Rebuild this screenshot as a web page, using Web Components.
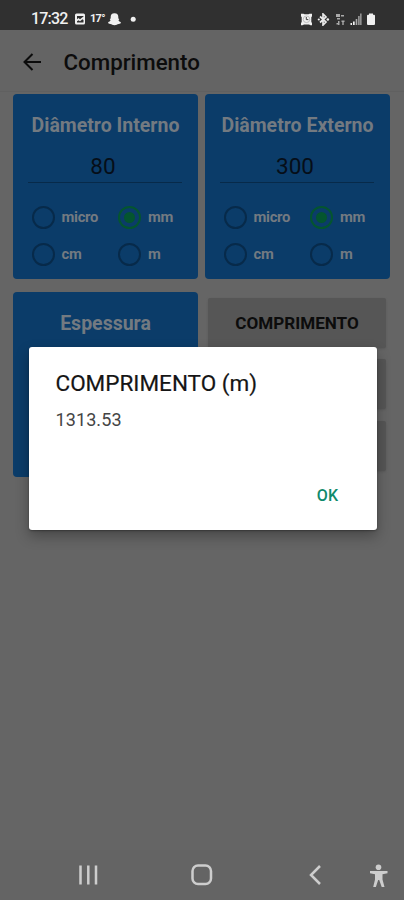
<!DOCTYPE html>
<html lang="pt">
<head>
<meta charset="utf-8">
<title>Comprimento</title>
<style>
  :root {
    --bg: #656565;
    --card: #0b3c69;
    --ink: #0c0c0c;
    --line: #072a4a;
    --label: #737a81;
    --on: #04552f;
  }
  body {
    margin: 0;
    font-family: Roboto, "Liberation Sans", sans-serif;
  }
</style>
</head>
<body>
<phone-screen>
  <status-bar slot="top" time="17:32" temp="17°"></status-bar>
  <app-bar slot="top">Comprimento</app-bar>

  <size-card label="Diâmetro Interno" value="80"></size-card>
  <size-card label="Diâmetro Externo" value="300"></size-card>
  <size-card label="Espessura"></size-card>
  <button-stack>
    <flat-button>COMPRIMENTO</flat-button>
    <flat-button></flat-button>
    <flat-button></flat-button>
  </button-stack>

  <nav-bar slot="bottom"></nav-bar>
  <alert-dialog slot="over" heading="COMPRIMENTO (m)" action="OK">1313.53</alert-dialog>
</phone-screen>

<script>
class PhoneScreen extends HTMLElement {
    constructor() {
        super();
        this.attachShadow({ mode: 'open' });
        this.shadowRoot.innerHTML = `
        <style>
          :host {
            position: relative;
            display: flex;
            flex-direction: column;
            width: 404px;
            height: 900px;
            overflow: hidden;
            background: var(--bg);
          }
          main {
            flex: 1;
            display: grid;
            grid-template-columns: 185px 185px;
            grid-auto-rows: 185px;
            align-content: start;
            gap: 13px 7px;
            padding: 0 13px;
          }
        </style>
        <slot name="top"></slot>
        <main><slot></slot></main>
        <slot name="bottom"></slot>
        <slot name="over"></slot>
        `
    }
}

class StatusBar extends HTMLElement {
    constructor() {
        super();
        this.attachShadow({ mode: 'open' });
        this.shadowRoot.innerHTML = `
        <style>
          :host {
            box-sizing: border-box;
            height: 30px;
            padding: 8px 28px 0 31px;
            display: flex;
            align-items: flex-start;
            background: #303030;
            color: #f0f0f0;
          }
          .time {
            width: 43px;
            font-size: 16px;
            line-height: 22px;
            font-weight: 500;
            letter-spacing: -.8px;
          }
          .temp {
            width: 18px;
            font-size: 11px;
            line-height: 21px;
            font-weight: 700;
            letter-spacing: -.7px;
          }
          svg { display: block; fill: #f0f0f0; margin-top: 5px; }
          .right { margin-left: auto; display: flex; gap: 4px; }
        </style>
        <span class="time">${this.getAttribute('time')}</span>
        <svg width="16" height="13" viewBox="0 0 16 13">
          <path fill-rule="evenodd" d="M2.500 .5h7q1.500 0 1.500 1.500v8q0 1.500-1.500 1.500h-7q-1.500 0-1.500-1.500v-8q0-1.500 1.500-1.500zM3 3v3.200l1.500-1.200 1.500 1.200 3.500-2.700v-.5zM3 9.500h6.500v-2.500l-1-.8-2.500 2-1.500-1-1.500 1z"/>
        </svg>
        <span class="temp">${this.getAttribute('temp')}</span>
        <svg width="14" height="13" viewBox="0 0 14 13">
          <path d="M6.500 .3c2.800 0 3.800 1.500 3.800 3.700v1.500l1 .6-.8 1.200c.4 1 1.300 1.500 2.400 1.900l-.4 1.200-1.800.5c-1.600 0-2.200 1.300-4.200 1.300s-2.600-1.300-4.200-1.300l-1.800-.5-.4-1.200c1.100-.4 2-.9 2.400-1.900l-.8-1.200 1-.6v-1.500c0-2.200 1-3.700 3.800-3.700z"/>
        </svg>
        <svg width="22" height="13" viewBox="0 0 22 13"><circle cx="11.200" cy="6.300" r="2.500"/></svg>
        <div class="right">
          <svg width="13" height="13" viewBox="0 0 13 13">
            <path d="M1 .7h2.500l1 .5h4l1-.5h2.500v2.500l-.7 1v4.500l.7 1.500v2h-1.500l-1.500-.7h-5l-1.500.7h-1.500v-2l.7-1.500v-4.500l-.7-1z"/>
            <circle cx="6.500" cy="6.300" r="3.300" fill="none" stroke="#aaa" stroke-width=".7"/>
            <path d="M6.300 4v2.600h2" fill="none" stroke="#444"/>
          </svg>
          <svg width="13" height="13" viewBox="0 0 13 13">
            <path d="M3 3.500l6 5.500-3 3v-11l3 3-6 5.500" fill="none" stroke="#e8e8e8" stroke-width="1.700"/>
            <circle cx="1.800" cy="6.500" r="1.100"/><circle cx="10.800" cy="6.500" r="1.300"/>
          </svg>
          <svg width="12" height="13" viewBox="0 0 12 13">
            <path d="M2 1h4v3h-4zM7 2h3v1.500h-3zM3 5h3v1.500h-3zM4 8h1.500v4h-1.500zM2.500 10h1.500v1.500h-1.500zM7.500 7.500h3v1.500h-.8v3h-1.400v-3h-.8z" fill="#aaa"/>
          </svg>
          <svg width="12" height="13" viewBox="0 0 12 13">
            <path d="M.5 10h1.500v2h-1.500zM3 8.500h1.700v3.500h-1.700z"/>
            <path d="M5.700 6h1.600v6h-1.600zM8.200 3h1.400v9h-1.400zM10.200 .5h1.300v11.500h-1.300z" fill="#aaa"/>
          </svg>
          <svg width="10" height="13" viewBox="0 0 10 13">
            <path d="M3 .5h4v1.200h1q1 0 1 1v8.300q0 1-1 1h-6q-1 0-1-1v-8.300q0-1 1-1h1z"/>
          </svg>
        </div>
        `
    }
}

class AppBar extends HTMLElement {
    constructor() {
        super();
        this.attachShadow({ mode: 'open' });
        this.shadowRoot.innerHTML = `
        <style>
          :host {
            box-sizing: border-box;
            height: 62px;
            margin-bottom: 1.500px;
            padding: 3px 22px 0;
            display: flex;
            align-items: center;
            gap: 21.500px;
            background: #646464;
            border-bottom: 1px solid #606060;
            color: var(--ink);
            font-size: 22.300px;
            font-weight: 500;
          }
        </style>
        <svg width="20" height="20" viewBox="0 0 20 20" fill="none" stroke="#0c0c0c" stroke-width="2">
          <path d="M19 10H3M10.500 2L2.500 10l8 8"/>
        </svg>
        <span><slot></slot></span>
        `
    }
}

class UnitRadio extends HTMLElement {
    constructor() {
        super();
        this.attachShadow({ mode: 'open' });
        this.shadowRoot.innerHTML = `
        <style>
          :host {
            display: flex;
            align-items: center;
            gap: 7px;
            color: var(--label);
            font-size: 14.800px;
            font-weight: 700;
            letter-spacing: -.3px;
          }
          i {
            box-sizing: border-box;
            width: 23px;
            height: 23px;
            border: 2px solid var(--line);
            border-radius: 50%;
            display: grid;
            place-items: center;
          }
          :host([checked]) i { border-color: var(--on); }
          :host([checked]) i::after {
            content: "";
            width: 11px;
            height: 11px;
            border-radius: 50%;
            background: var(--on);
          }
        </style>
        <i></i><span><slot></slot></span>
        `
    }
}

class SizeCard extends HTMLElement {
    constructor() {
        super();
        this.attachShadow({ mode: 'open' });
        const value = this.getAttribute('value')
        this.shadowRoot.innerHTML = `
        <style>
          :host {
            box-sizing: border-box;
            padding: 19.500px 15px 0;
            border-radius: 4px;
            background: var(--card);
            text-align: center;
          }
          h2 {
            margin: 0 -10px;
            color: var(--label);
            font-size: 19.500px;
            line-height: 26px;
            font-weight: 700;
            white-space: nowrap;
          }
          .value {
            box-sizing: border-box;
            height: 43.500px;
            margin-right: 1px;
            padding: 12.500px 4px 0 0;
            border-bottom: 1px solid var(--line);
            color: #060e18;
            font-size: 22.500px;
            line-height: 28px;
          }
          .units {
            display: grid;
            grid-template-columns: 86.500px 1fr;
            grid-auto-rows: 37px;
            padding: 16px 0 0 3.500px;
          }
        </style>
        <h2>${this.getAttribute('label')}</h2>
        ${value ? `
        <div class="value">${value}</div>
        <div class="units">
          <unit-radio>micro</unit-radio>
          <unit-radio checked>mm</unit-radio>
          <unit-radio>cm</unit-radio>
          <unit-radio>m</unit-radio>
        </div>` : ''}
        `
    }
}

class ButtonStack extends HTMLElement {
    constructor() {
        super();
        this.attachShadow({ mode: 'open' });
        this.shadowRoot.innerHTML = `
        <style>
          :host {
            display: flex;
            flex-direction: column;
            gap: 11.500px;
            padding: 6px 4px 0 3px;
          }
        </style>
        <slot></slot>
        `
    }
}

class FlatButton extends HTMLElement {
    constructor() {
        super();
        this.attachShadow({ mode: 'open' });
        this.shadowRoot.innerHTML = `
        <style>
          :host {
            display: flex;
            align-items: center;
            justify-content: center;
            height: 50px;
            border-radius: 2px;
            background: #565656;
            box-shadow: 0 1px 2px #5a5a5a;
            color: #0c0c0c;
            font-size: 17.100px;
            font-weight: 700;
          }
        </style>
        <slot></slot>
        `
    }
}

class AlertDialog extends HTMLElement {
    constructor() {
        super();
        this.attachShadow({ mode: 'open' });
        this.shadowRoot.innerHTML = `
        <style>
          :host {
            position: absolute;
            left: 28.500px;
            top: 346.500px;
            box-sizing: border-box;
            width: 348.500px;
            height: 183.500px;
            padding: 21px 27px 0;
            display: flex;
            flex-direction: column;
            border-radius: 3px;
            background: #fff;
            box-shadow: 0 6px 14px rgba(0, 0, 0, .3), 0 1px 2px rgba(0, 0, 0, .3);
          }
          h1 {
            margin: 0;
            color: #151515;
            font-size: 22.500px;
            line-height: 30px;
            font-weight: 400;
            -webkit-text-stroke: .2px;
          }
          p {
            margin: 11.500px 0 0;
            color: #444;
            font-size: 18px;
            line-height: 22px;
            letter-spacing: .1px;
          }
          b {
            align-self: flex-end;
            margin: auto 12px 24px 0;
            color: #0f8a6b;
            font-size: 16px;
            line-height: 20px;
            font-weight: 500;
          }
        </style>
        <h1>${this.getAttribute('heading')}</h1>
        <p><slot></slot></p>
        <b>${this.getAttribute('action')}</b>
        `
    }
}

class NavBar extends HTMLElement {
    constructor() {
        super();
        this.attachShadow({ mode: 'open' });
        this.shadowRoot.innerHTML = `
        <style>
          :host {
            height: 50px;
            display: grid;
            grid-template-columns: 145px 113px 113px 33px;
            align-items: center;
            background: #646464;
          }
          svg { fill: none; stroke: #cdcdcd; stroke-width: 2.500; }
          .recent { margin-left: 78px; }
          .home { margin-left: 46px; }
          .back { margin-left: 50px; }
          .access { margin: 2px 0 0 -2px; }
        </style>
        <svg class="recent" width="21" height="21" viewBox="0 0 21 21"><path d="M2.500 .5v19M10.300 .5v19M18 .5v19"/></svg>
        <svg class="home" width="22" height="22" viewBox="0 0 22 22"><rect x="1.500" y="1.500" width="18.500" height="18.500" rx="5.500"/></svg>
        <svg class="back" width="14" height="21" viewBox="0 0 14 21"><path d="M12 1L3 10l9 9"/></svg>
        <svg class="access" width="20" height="24" viewBox="0 0 20 24">
          <circle cx="9.500" cy="3.200" r="2.800" fill="#cdcdcd" stroke="none"/>
          <path d="M1 7h17.500v2.200l-5 1v5.300l2 7.500h-2.800l-2.500-7h-1l-2.300 7h-2.700l1.800-7.500v-5.300l-5-1z" fill="#cdcdcd" stroke="none"/>
        </svg>
        `
    }
}

window.customElements.define('phone-screen', PhoneScreen);
window.customElements.define('status-bar', StatusBar);
window.customElements.define('app-bar', AppBar);
window.customElements.define('unit-radio', UnitRadio);
window.customElements.define('size-card', SizeCard);
window.customElements.define('button-stack', ButtonStack);
window.customElements.define('flat-button', FlatButton);
window.customElements.define('alert-dialog', AlertDialog);
window.customElements.define('nav-bar', NavBar);
</script>
</body>
</html>
